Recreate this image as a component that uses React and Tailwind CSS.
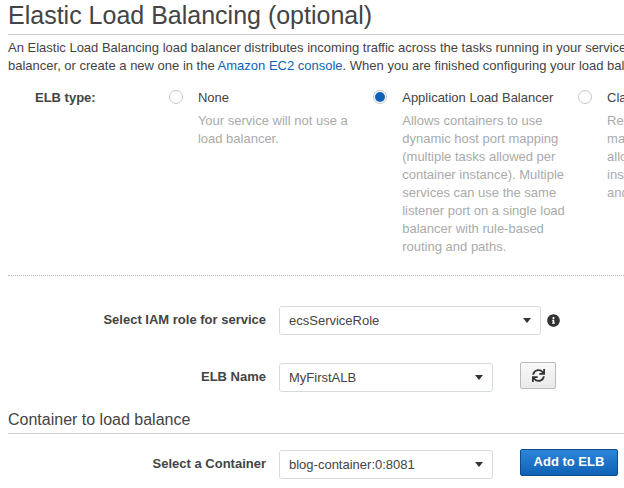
import React from 'react';
import { FaInfoCircle, FaSync } from 'react-icons/fa';

const radioOff = 'mt-[1px] w-[14px] h-[14px] rounded-full bg-white border border-[#c6c6c6] shrink-0';
const selectBase = 'h-[29px] flex items-center justify-between pl-[9px] pr-[9px] bg-white border border-[#d5dbdb] rounded-[3px] text-[13px] text-[#444]';

function Caret() {
  return <span className="w-0 h-0 border-x-[4.5px] border-x-transparent border-t-[5px] border-t-[#333]" />;
}

function Option({ checked, title, lines, className }) {
  return (
    <div className={className}>
      <div className="flex">
        {checked ? (
          <span className="mt-[1px] w-[14px] h-[14px] rounded-full bg-white border border-[#c6c6c6] shrink-0 flex items-center justify-center">
            <span className="w-[10px] h-[10px] rounded-full bg-[#0f62b5]" />
          </span>
        ) : (
          <span className={radioOff} />
        )}
        <div className="ml-[15px] whitespace-nowrap">
          <div className="text-[13px] leading-[18px] text-[#444]">{title}</div>
          <div className="mt-[5px] text-[13px] leading-[18px] text-[#aaa]">
            {lines.map((l) => (
              <div key={l}>{l}</div>
            ))}
          </div>
        </div>
      </div>
    </div>
  );
}

function Row({ label, className, children }) {
  return (
    <div className={`flex items-center ${className}`}>
      <div className="w-[266px] pb-[2px] text-right text-[13px] font-bold text-[#444]">{label}</div>
      <div className="ml-[13px] flex items-center">{children}</div>
    </div>
  );
}

export default function App() {
  return (
    <div className="w-[624px] h-[488px] overflow-hidden bg-white font-['Liberation_Sans',sans-serif]">
      <h1 className="ml-[8px] text-[25px] leading-[30px] text-[#444] whitespace-nowrap">Elastic Load Balancing (optional)</h1>
      <div className="ml-[8px] mt-[4px] h-px bg-[#ccc]" />
      <p className="ml-[8px] mt-[4px] text-[13px] leading-[18px] text-[#444] whitespace-nowrap">
        An Elastic Load Balancing load balancer distributes incoming traffic across the tasks running in your service
        <br />
        balancer, or create a new one in the <span className="text-[#0f62b5]">Amazon EC2 console</span>. When you are finished configuring your load balancer
      </p>
      <div className="flex mt-[14px] h-[176px] overflow-hidden">
        <div className="w-[169px] pl-[35px] text-[13px] leading-[18px] font-bold text-[#444]">ELB type:</div>
        <Option className="w-[204.5px]" title="None" lines={['Your service will not use a', 'load balancer.']} />
        <Option
          className="w-[205px]"
          checked
          title="Application Load Balancer"
          lines={[
            'Allows containers to use',
            'dynamic host port mapping',
            '(multiple tasks allowed per',
            'container instance). Multiple',
            'services can use the same',
            'listener port on a single load',
            'balancer with rule-based',
            'routing and paths.',
          ]}
        />
        <Option
          className="w-[46px] overflow-hidden"
          title="Classic Load Balancer"
          lines={['Requires static host port', 'mapping (only one task', 'allowed per container', 'instance); rule-based', 'and paths']}
        />
      </div>
      <div className="ml-[8px] mt-[10px] border-t border-dotted border-[#bbb]" />
      <Row label="Select IAM role for service" className="mt-[30px]">
        <div className={`${selectBase} w-[262px]`}>
          ecsServiceRole
          <Caret />
        </div>
        <FaInfoCircle className="ml-[6px] w-[13px] h-[13px] text-[#333]" />
      </Row>
      <Row label="ELB Name" className="mt-[28px]">
        <div className={`${selectBase} w-[214px]`}>
          MyFirstALB
          <Caret />
        </div>
        <button className="ml-[27px] -mt-[4px] w-[36px] h-[27px] flex items-center justify-center rounded-[2px] border border-[#bbb] bg-gradient-to-b from-[#f9f9f9] to-[#e9e9e9]">
          <FaSync className="w-[13px] h-[13px] text-[#333]" />
        </button>
      </Row>
      <h2 className="ml-[8px] mt-[17px] text-[16px] leading-[22px] text-[#444]">Container to load balance</h2>
      <div className="ml-[8px] mt-[2px] h-px bg-[#ccc]" />
      <Row label="Select a Container" className="mt-[16px]">
        <div className={`${selectBase} w-[214px]`}>
          blog-container:0:8081
          <Caret />
        </div>
        <button className="ml-[27px] -mt-[4px] w-[98px] h-[27px] pb-[1px] rounded-[2px] border border-[#0f4c8c] bg-gradient-to-b from-[#2b86d9] to-[#0f62b5] text-[13px] font-bold text-white">
          Add to ELB
        </button>
      </Row>
    </div>
  );
}
